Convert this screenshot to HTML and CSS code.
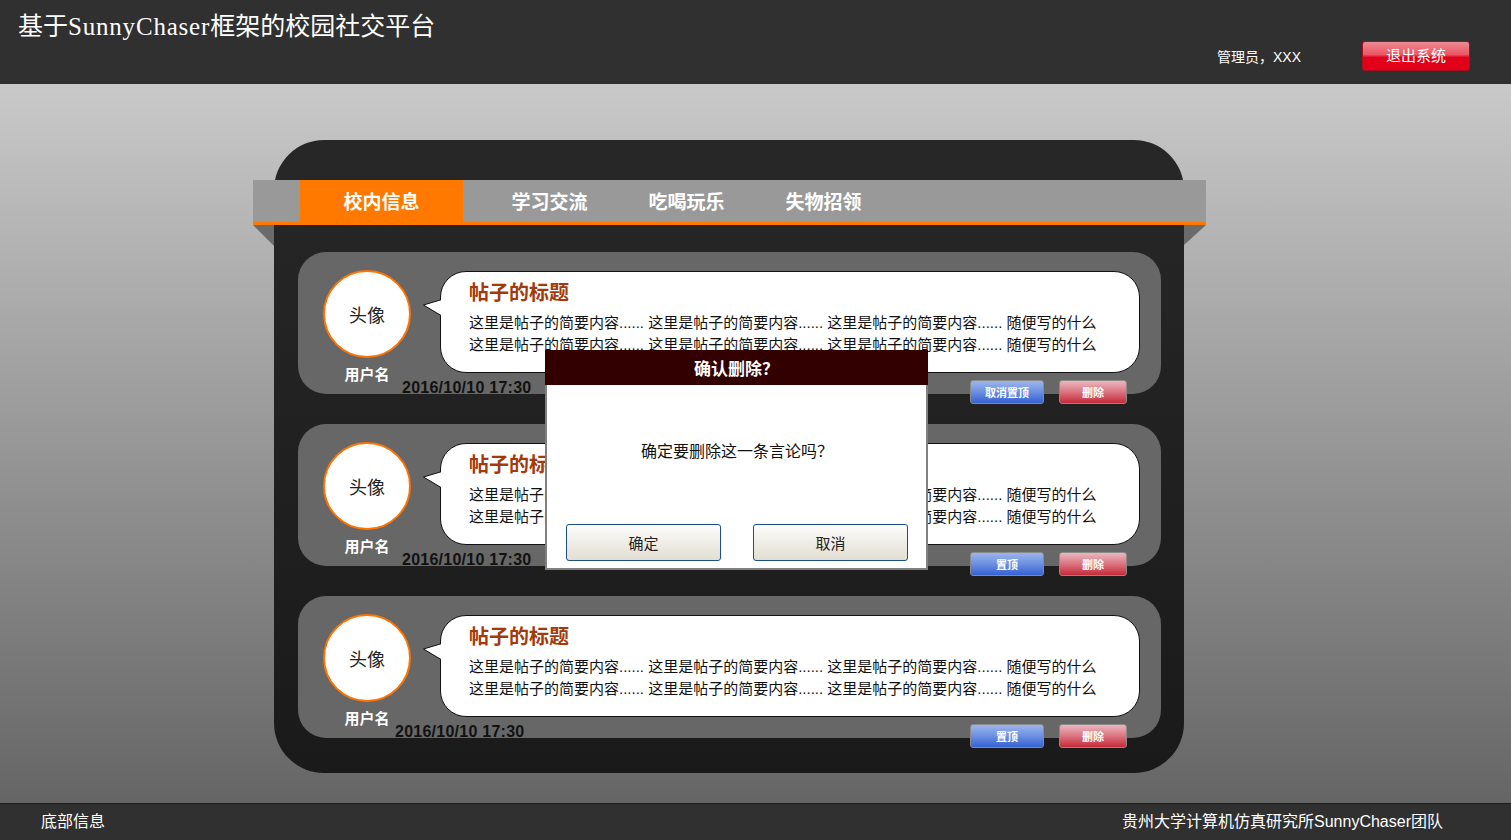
FILE: index.html
```html
<!DOCTYPE html>
<html lang="zh-CN">
<head>
<meta charset="utf-8">
<title>基于SunnyChaser框架的校园社交平台</title>
<link rel="stylesheet" href="styles.css">
</head>
<body>
<header class="topbar">
  <h1 class="site-title">基于<span class="latin">SunnyChaser</span>框架的校园社交平台</h1>
  <div class="user-area">
    <span class="user-name">管理员，XXX</span>
    <button class="logout">退出系统</button>
  </div>
</header>

<main class="main">
  <section class="panel">
    <nav class="tabs">
      <a class="tab active">校内信息</a>
      <a class="tab first">学习交流</a>
      <a class="tab">吃喝玩乐</a>
      <a class="tab">失物招领</a>
    </nav>

    <div class="posts">
      <article class="post">
        <div class="post-main">
          <div class="author">
            <div class="avatar">头像</div>
            <div class="username">用户名</div>
          </div>
          <div class="bubble">
            <svg class="tail" width="19" height="18" viewBox="0 0 19 18"><path d="M19 0.5 L0.5 6 L19 17 Z" fill="#fff"/><path d="M18 0.8 L0.5 6 L18 16.5" fill="none" stroke="#111" stroke-width="1"/></svg>
            <h2 class="post-title">帖子的标题</h2>
            <p class="post-text">这里是帖子的简要内容...... 这里是帖子的简要内容...... 这里是帖子的简要内容...... 随便写的什么</p>
            <p class="post-text">这里是帖子的简要内容...... 这里是帖子的简要内容...... 这里是帖子的简要内容...... 随便写的什么</p>
          </div>
        </div>
        <div class="post-meta">
          <span class="date">2016/10/10 17:30</span>
          <div class="actions">
            <button class="btn btn-blue">取消置顶</button>
            <button class="btn btn-red">删除</button>
          </div>
        </div>
      </article>

      <article class="post">
        <div class="post-main">
          <div class="author">
            <div class="avatar">头像</div>
            <div class="username">用户名</div>
          </div>
          <div class="bubble">
            <svg class="tail" width="19" height="18" viewBox="0 0 19 18"><path d="M19 0.5 L0.5 6 L19 17 Z" fill="#fff"/><path d="M18 0.8 L0.5 6 L18 16.5" fill="none" stroke="#111" stroke-width="1"/></svg>
            <h2 class="post-title">帖子的标题</h2>
            <p class="post-text">这里是帖子的简要内容...... 这里是帖子的简要内容...... 这里是帖子的简要内容...... 随便写的什么</p>
            <p class="post-text">这里是帖子的简要内容...... 这里是帖子的简要内容...... 这里是帖子的简要内容...... 随便写的什么</p>
          </div>
        </div>
        <div class="post-meta">
          <span class="date">2016/10/10 17:30</span>
          <div class="actions">
            <button class="btn btn-blue">置顶</button>
            <button class="btn btn-red">删除</button>
          </div>
        </div>
      </article>

      <article class="post">
        <div class="post-main">
          <div class="author">
            <div class="avatar">头像</div>
            <div class="username">用户名</div>
          </div>
          <div class="bubble">
            <svg class="tail" width="19" height="18" viewBox="0 0 19 18"><path d="M19 0.5 L0.5 6 L19 17 Z" fill="#fff"/><path d="M18 0.8 L0.5 6 L18 16.5" fill="none" stroke="#111" stroke-width="1"/></svg>
            <h2 class="post-title">帖子的标题</h2>
            <p class="post-text">这里是帖子的简要内容...... 这里是帖子的简要内容...... 这里是帖子的简要内容...... 随便写的什么</p>
            <p class="post-text">这里是帖子的简要内容...... 这里是帖子的简要内容...... 这里是帖子的简要内容...... 随便写的什么</p>
          </div>
        </div>
        <div class="post-meta">
          <span class="date date-left">2016/10/10 17:30</span>
          <div class="actions">
            <button class="btn btn-blue">置顶</button>
            <button class="btn btn-red">删除</button>
          </div>
        </div>
      </article>
    </div>
  </section>
</main>

<footer class="footer">
  <span>底部信息</span>
  <span>贵州大学计算机仿真研究所SunnyChaser团队</span>
</footer>

<div class="dialog">
  <div class="dialog-head">确认删除<span class="fw-q">？</span></div>
  <div class="dialog-body">
    <p class="dialog-msg">确定要删除这一条言论吗<span class="fw-q">？</span></p>
    <div class="dialog-actions">
      <button class="dlg-btn">确定</button>
      <button class="dlg-btn">取消</button>
    </div>
  </div>
</div>
</body>
</html>
```

FILE: styles.css
```css
* {
  box-sizing: border-box;
  margin: 0;
  padding: 0;
}

html, body {
  width: 1511px;
  height: 840px;
  overflow: hidden;
}

body {
  position: relative;
  display: flex;
  flex-direction: column;
  background: #303030;
  font-family: "Liberation Sans", "Noto Sans CJK SC", sans-serif;
  color: #111;
}

button {
  font-family: "Liberation Sans", "Noto Sans CJK SC", sans-serif;
  cursor: pointer;
}

/* ---------- header ---------- */
.topbar {
  height: 84px;
  flex: none;
  background: #303030;
  display: flex;
  justify-content: space-between;
  padding: 0 41px 13px 18px;
}

.site-title {
  align-self: flex-start;
  margin-top: 11px;
  font-family: "Liberation Serif", "Noto Sans CJK SC", serif;
  font-weight: normal;
  font-size: 25px;
  line-height: 32px;
  color: #fff;
}

.latin {
  letter-spacing: 0.8px;
}

.user-area {
  align-self: flex-end;
  display: flex;
  align-items: center;
  gap: 61px;
}

.user-name {
  color: #fff;
  font-size: 14px;
  margin-top: -1px;
}

.logout {
  width: 108px;
  height: 30px;
  border: 1px solid #a8101c;
  border-radius: 3px;
  background: linear-gradient(#f08a93 0%, #ea5663 45%, #e2001a 55%, #e0001a 100%);
  color: #fff;
  font-size: 15px;
  line-height: 26px;
}

/* ---------- main ---------- */
.main {
  height: 719px;
  flex: none;
  background: linear-gradient(#c9c9c9, #656565);
  padding: 56px 0 0 274px;
}

.panel {
  width: 910px;
  height: 633px;
  border-radius: 50px;
  background: linear-gradient(#272727, #1a1a1a);
  padding-top: 40px;
}

.tabs {
  position: relative;
  margin: 0 -22px 0 -21px;
  height: 45px;
  background: #999;
  border-bottom: 3px solid #ff7800;
  display: flex;
  padding-left: 47px;
}

.tabs::before {
  content: "";
  position: absolute;
  left: 0;
  top: 45px;
  width: 0;
  height: 0;
  border-top: 21px solid #6b6b6b;
  border-left: 21px solid transparent;
}

.tabs::after {
  content: "";
  position: absolute;
  right: 0;
  top: 45px;
  width: 0;
  height: 0;
  border-top: 20px solid #6b6b6b;
  border-right: 22px solid transparent;
}

.tab {
  width: 137px;
  height: 42px;
  line-height: 42px;
  text-align: center;
  color: #fff;
  font-size: 19px;
  font-weight: bold;
  font-family: "Noto Sans CJK SC", sans-serif;
}

.tab.first {
  margin-left: 18px;
}

.tab.active {
  width: 163px;
  height: 45px;
  background: #ff7800;
}

.posts {
  margin-top: 27px;
  padding: 0 23px 0 24px;
  display: flex;
  flex-direction: column;
  gap: 30px;
}

.post {
  height: 142px;
  background: #676767;
  border-radius: 28px;
  padding: 18px 21px 0 25px;
}

.post-main {
  display: flex;
  align-items: flex-start;
}

.author {
  width: 88px;
  display: flex;
  flex-direction: column;
  align-items: center;
}

.avatar {
  width: 88px;
  height: 88px;
  border-radius: 50%;
  border: 2px solid #ff7300;
  background: #fff;
  display: flex;
  align-items: center;
  justify-content: center;
  font-size: 18px;
  color: #222;
  font-family: "Noto Sans CJK SC", sans-serif;
}

.username {
  margin-top: 8px;
  font-size: 15px;
  line-height: 18px;
  font-weight: bold;
  color: #fff;
}

.bubble {
  position: relative;
  margin-left: 29px;
  margin-top: 1px;
  width: 700px;
  height: 102px;
  background: #fff;
  border: 1px solid #111;
  border-radius: 26px;
  padding: 9px 0 0 28px;
}

.tail {
  position: absolute;
  left: -18px;
  top: 27px;
}

.post-title {
  font-size: 20px;
  line-height: 24px;
  font-weight: bold;
  color: #a23a0c;
  margin-bottom: 7px;
}

.post-text {
  font-size: 15px;
  line-height: 22px;
  color: #111;
  white-space: nowrap;
}

.post-meta {
  display: flex;
  align-items: flex-start;
  margin-top: -6px;
}

.date {
  margin-left: 79px;
  margin-top: 1px;
  font-size: 16px;
  line-height: 18px;
  font-weight: bold;
  letter-spacing: 0.25px;
  color: #111;
}

.date.date-left {
  margin-left: 72px;
}

.actions {
  margin-left: auto;
  margin-top: 2px;
  margin-right: 13px;
  display: flex;
  gap: 15px;
}

.btn {
  height: 24px;
  border: 1px solid #8a8a8a;
  border-radius: 3px;
  color: #fff;
  font-size: 11px;
  font-weight: bold;
}

.btn-blue {
  width: 74px;
  background: linear-gradient(#9db5ec, #6c8fe0 50%, #3562d4);
}

.btn-red {
  width: 68px;
  background: linear-gradient(#ebb7be, #db7480 50%, #c62a38);
}

/* ---------- footer ---------- */
.footer {
  height: 37px;
  flex: none;
  background: #303030;
  border-top: 1px solid #1c1c1c;
  display: flex;
  align-items: center;
  justify-content: space-between;
  padding: 0 68px 4px 41px;
  color: #fff;
  font-size: 16px;
}

/* ---------- dialog ---------- */
.dialog {
  position: absolute;
  left: 545px;
  top: 350px;
  width: 383px;
}

.dialog-head {
  height: 35px;
  background: #330000;
  color: #fff;
  font-size: 17px;
  font-weight: bold;
  line-height: 35px;
  text-align: center;
  font-family: "Noto Sans CJK SC", sans-serif;
}

.fw-q {
  font-family: "Noto Sans CJK TC", "Noto Sans CJK SC", sans-serif;
}

.dialog-body {
  height: 185px;
  background: #fff;
  border: 2px solid #808080;
  border-top: 0;
  padding: 53px 18px 0 19px;
}

.dialog-msg {
  font-size: 16px;
  line-height: 24px;
  text-align: center;
  color: #111;
  font-family: "Noto Sans CJK SC", sans-serif;
}

.dialog-actions {
  margin-top: 62px;
  display: flex;
  justify-content: space-between;
}

.dlg-btn {
  width: 155px;
  height: 37px;
  border: 1px solid #1c4f86;
  border-radius: 3px;
  background: linear-gradient(#fdfdfb, #e2ded3);
  font-size: 15px;
  color: #222;
}
```
